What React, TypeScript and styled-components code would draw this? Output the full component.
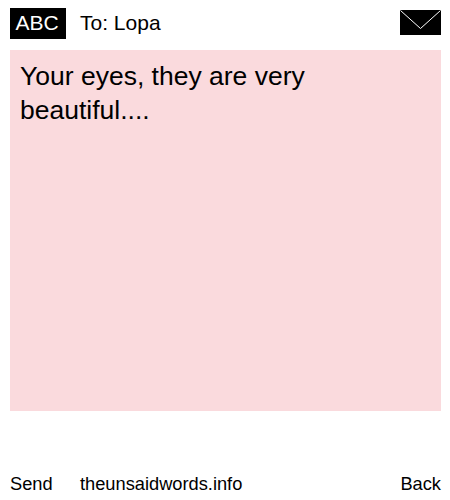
import React from "react";
import styled, { createGlobalStyle } from "styled-components";

const Global = createGlobalStyle`
  html, body { margin: 0; padding: 0; background: #fff; }
  body { font-family: "Liberation Sans", Arial, sans-serif; color: #000; }
`;

const Page = styled.div`
  width: 450px;
  height: 500px;
  box-sizing: border-box;
  padding: 8px 9px 0 10px;
  display: flex;
  flex-direction: column;
`;

const Header = styled.header`
  display: flex;
  align-items: center;
  height: 31px;
`;

const Badge = styled.div`
  width: 56px;
  height: 31px;
  box-sizing: border-box;
  padding-right: 2px;
  background: #000;
  color: #fff;
  font-size: 21px;
  line-height: 30px;
  text-align: center;
`;

const Recipient = styled.div`
  margin-left: 14px;
  font-size: 21px;
  line-height: 30px;
  flex: 1;
  margin-top: -1px;
`;

const EnvelopeIcon = styled.svg`
  display: block;
  width: 41px;
  height: 25px;
  margin-top: -2px;
`;

const Message = styled.main`
  margin-top: 11px;
  height: 361px;
  box-sizing: border-box;
  background: #fadadd;
  padding: 9px 10px;
  font-size: 26.5px;
  line-height: 34px;
`;

const Footer = styled.footer`
  margin-top: 61px;
  display: flex;
  font-size: 18.25px;
  line-height: 24px;
`;

const SendLink = styled.span`
  width: 70px;
`;

const SiteLink = styled.span`
  flex: 1;
`;

export default function App() {
  return (
    <>
      <Global />
      <Page>
        <Header>
          <Badge>ABC</Badge>
          <Recipient>To: Lopa</Recipient>
          <EnvelopeIcon viewBox="0 0 41 25">
            <rect width="41" height="25" fill="#000" />
            <path d="M0.5 0.5 L20.5 18.5 L40.5 0.5" fill="none" stroke="#fff" strokeWidth="1" />
          </EnvelopeIcon>
        </Header>
        <Message>Your eyes, they are very beautiful....</Message>
        <Footer>
          <SendLink>Send</SendLink>
          <SiteLink>theunsaidwords.info</SiteLink>
          <span>Back</span>
        </Footer>
      </Page>
    </>
  );
}
